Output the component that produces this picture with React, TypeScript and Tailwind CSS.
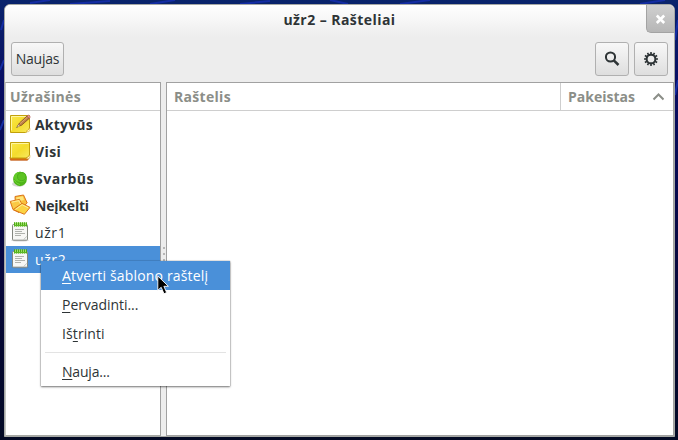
import React from "react";

function NoteIcon({ pencil = false }: { pencil?: boolean }) {
  return (
    <svg width="22" height="20" viewBox="0 0 22 20" className="mb-px block">
      <defs>
        <linearGradient id="noteFill" x1="0" y1="0" x2="1" y2="1">
          <stop offset="0" stopColor="#fbe94a" />
          <stop offset="0.5" stopColor="#f4dc2c" />
          <stop offset="1" stopColor="#f8ea60" />
        </linearGradient>
      </defs>
      {!pencil && <path d="M1 16 L1.5 19.2 H18.5 L20.8 16" fill="#dd7410" stroke="#c0591a" strokeWidth="0.8" />}
      <path d={pencil ? "M1.5 1.5 H20.5 V14 Q19 18.5 16.5 18.5 H1.5 Z" : "M1.5 1.5 H20.5 V14 Q19 17 16.5 17 H1.5 Z"} fill="url(#noteFill)" stroke="#c2a00b" />
      <path d="M2.5 16.5 V2.5 H19.5" fill="none" stroke="#fff6a0" strokeWidth="1" />
      <path d="M17 17.2 Q19.5 16.5 20.8 14 L21 16.5 L19 18 Z" fill="#fff9d9" stroke="#d4a519" strokeWidth="0.5" />
      {pencil && (
        <g>
          <path d="M8.5 12 L10.5 9 L18 2 L20.2 4.4 L12.5 11.3 Z" fill="#c08145" stroke="#713b1c" strokeWidth="0.7" />
          <path d="M11 9.6 L18.6 3" stroke="#e4b37a" strokeWidth="0.8" />
          <path d="M18 2 L19.6 0.9 L21.4 3 L20.2 4.4 Z" fill="#ea9c98" stroke="#a54848" strokeWidth="0.5" />
          <path d="M7.4 13.5 L9.4 10.6 L11.2 12 Z" fill="#eadbb8" stroke="#8c6a35" strokeWidth="0.4" />
          <path d="M7.2 13.7 L8.3 12.4 L9 13 Z" fill="#333" />
        </g>
      )}
    </svg>
  );
}

function PinIcon() {
  return (
    <svg width="22" height="20" viewBox="0 0 22 20" className="block">
      <ellipse cx="9.5" cy="15" rx="6.5" ry="2.8" fill="#b9bdb5" opacity="0.6" />
      <ellipse cx="11" cy="10" rx="6.9" ry="7.2" fill="#4fb519" />
      <path d="M4.6 8.5 Q5.5 3.2 11 2.8 Q17 3.4 17.7 8.5 Q16.5 13 12.5 13.2 Q6.5 13 4.6 8.5Z" fill="#63ca28" />
      <ellipse cx="12.7" cy="7.6" rx="4.2" ry="4" fill="#5cc322" stroke="#45a816" strokeWidth="0.8" />
      <path d="M5.3 11 Q7 14.6 11 15.6" fill="none" stroke="#6fd432" strokeWidth="1" />
    </svg>
  );
}

function UnfiledIcon() {
  return (
    <svg width="22" height="22" viewBox="0 0 22 22" className="mb-px block">
      <g strokeLinejoin="round" strokeWidth="1">
        <path d="M6 2.5 L14.5 1 L18.2 9 L14 13 L6.5 12 Z" fill="#f9c03e" stroke="#dc7519" />
        <path d="M7.2 3.5 L13.9 2.3 L15 6 L8 8Z" fill="#fde57b" />
        <path d="M1.2 7.4 L10.5 5.4 L14.5 14 L10 18.5 L4 15.6 Z" fill="#fac945" stroke="#dc7519" />
        <path d="M2.8 8.2 L9.9 6.7 L12 10.5" fill="none" stroke="#fee88c" strokeWidth="1.2" />
        <path d="M4.2 15.6 L13 9.4 L21 13.4 L15.4 20.3 Z" fill="#fbd343" stroke="#dc7519" />
        <path d="M6.5 15.4 L13.1 10.7 L19.2 13.8" fill="none" stroke="#feee9a" />
      </g>
    </svg>
  );
}

function NotebookIcon() {
  return (
    <svg width="22" height="22" viewBox="0 0 22 22" className="mb-px block">
      <ellipse cx="11" cy="19.3" rx="9" ry="1.2" fill="#777" opacity="0.3" />
      <rect x="3.5" y="3.5" width="15" height="15.7" rx="1" fill="#f7f7f5" stroke="#83867f" />
      <rect x="5" y="1.5" width="12" height="3.8" fill="#9ade65" />
      <path d="M5 3.3 H18" stroke="#4faa18" strokeWidth="4.2" strokeDasharray="1 1" />
      <path d="M5 4.5 H17" stroke="#5bb722" />
      <path d="M6 8.5 H15 M6 10.5 H13 M6 12.5 H16 M6 14.5 H12" stroke="#b0b2ad" />
      <path d="M14.5 18.7 L18 15.2" stroke="#c2c4bf" />
    </svg>
  );
}

function SearchIcon() {
  return (
    <svg width="16" height="16" viewBox="0 0 16 16">
      <circle cx="6.5" cy="6" r="4.6" fill="none" stroke="#2e3436" strokeWidth="2" />
      <path d="M9.8 9.3 L14.5 14" stroke="#2e3436" strokeWidth="2.5" />
    </svg>
  );
}

function GearIcon() {
  return (
    <svg width="16" height="16" viewBox="0 0 16 16">
      <circle cx="8" cy="8" r="4.4" fill="none" stroke="#2e3436" strokeWidth="2.1" />
      <path
        d="M8 1V3.5M8 12.5V15M1 8H3.5M12.5 8H15M4.5 1.9L5.7 4M10.3 12L11.5 14.1M11.5 1.9L10.3 4M5.7 12L4.5 14.1M1.9 4.5L4 5.7M12 10.3L14.1 11.5M14.1 4.5L12 5.7M4 10.3L1.9 11.5"
        stroke="#2e3436"
        strokeWidth="1.6"
      />
    </svg>
  );
}

const button =
  "flex h-[34px] items-center justify-center rounded-[3px] border border-[#b0b0b0] bg-linear-to-b from-[#f8f8f8] to-[#dedede]";

const notebooks = [
  { name: "Aktyvūs", icon: <NoteIcon pencil />, text: "font-bold tracking-[0.2px]" },
  { name: "Visi", icon: <NoteIcon />, text: "font-bold tracking-[0.4px]" },
  { name: "Svarbūs", icon: <PinIcon />, text: "font-bold tracking-[0.5px]" },
  { name: "Neįkelti", icon: <UnfiledIcon />, text: "font-bold tracking-[-0.2px]" },
  { name: "užr1", icon: <NotebookIcon />, text: "tracking-[0.6px]" },
  { name: "užr2", icon: <NotebookIcon />, text: "tracking-[0.6px]", selected: true },
];

function ContextMenu() {
  const item = "flex h-[29px] items-center pl-[21px] text-[14px] whitespace-pre";
  const key = "underline underline-offset-2 decoration-1";
  return (
    <div className="absolute left-[41px] top-[261px] h-[125px] w-[189px] bg-white shadow-[0_1px_2px_rgba(0,0,0,0.5),0_0_1px_rgba(0,0,0,0.5)]">
      <div className={item + " bg-[#4a90d9] text-white tracking-[0.17px]"}>
        <span><span className={key}>A</span>tverti šablono raštelį</span>
      </div>
      <div className={item + " tracking-[-0.05px]"}>
        <span><span className={key}>P</span>ervadinti...</span>
      </div>
      <div className={item + " tracking-[0.1px]"}>
        <span>Iš<span className={key}>t</span>rinti</span>
      </div>
      <div className="mx-1 my-[4px] h-px bg-[#e3e3e3]" />
      <div className={item + " tracking-[-0.2px]"}>
        <span><span className={key}>N</span>auja...</span>
      </div>
    </div>
  );
}

export default function App() {
  return (
    <div className="relative h-[440px] w-[678px] overflow-hidden bg-[linear-gradient(180deg,#0a246c_0%,#080d62_20%,#07083e_60%,#030a25_100%)] pt-1 pl-1 font-['Open_Sans','Noto_Sans',sans-serif] text-[#2e3436]">
      <svg width="678" height="440" className="absolute inset-0">
        <path d="M30 3 L50 0 M70 4 L110 1 M150 4 L175 0 M240 4 L270 1 M330 0 L348 4 M400 4 L430 0 M640 4 L665 0 M1 30 L4 20 M0 70 L4 60 M0 130 L4 120 M675 40 L678 20 M675 95 L678 80" stroke="#142da4" strokeWidth="2" />
      </svg>
      <div className="relative flex h-[433px] w-[671px] flex-col overflow-hidden rounded-t-[6px] border border-[#a6a8a4] bg-[#ededed]">
        <header className="flex h-[32px] shrink-0 items-start bg-linear-to-b from-white to-[#ededed]">
          <div className="w-[28px]" />
          <h1 className="flex-1 pt-[5px] text-center text-[14px] leading-[20px] font-bold tracking-[0.45px]">užr2 – Rašteliai</h1>
          <div className="flex h-[28px] w-[28px] items-center justify-center rounded-bl-[5px] border-b border-l border-[#a3a3a3] bg-linear-to-b from-[#d0d0d0] to-[#b6b6b6]">
            <svg width="12" height="12" viewBox="0 0 12 12">
              <path d="M1.8 2.5 L9.2 10 M9.2 2.5 L1.8 10" stroke="#fff" strokeWidth="2.6" />
            </svg>
          </div>
        </header>
        <div className="flex h-[45px] shrink-0 items-start gap-[5px] pt-[5px] pr-[6px] pl-[6px]">
          <button className={button + " w-[53px] pb-[2px] text-[14px] tracking-[-0.2px]"}>Naujas</button>
          <div className="flex-1" />
          <button className={button + " w-[34px]"}><SearchIcon /></button>
          <button className={button + " w-[34px]"}><GearIcon /></button>
        </div>
        <main className="flex min-h-0 flex-1">
          <aside className="w-[156px] shrink-0 border border-b-[#a6a8a4] border-l-[#c4c5c3] border-t-[#a1a1a1] border-r-[#a1a1a1] bg-white">
            <div className="flex h-[28px] items-center border-b border-[#cecece] pl-1 text-[14px] font-bold tracking-[0.35px] text-[#8b8e88]">Užrašinės</div>
            {notebooks.map((n) => (
              <div key={n.name} className={"flex h-[27px] items-center pl-[3px] " + (n.selected ? "bg-[#4a90d9] text-white" : "")}>
                {n.icon}
                <span className={"ml-[4px] text-[14px] " + n.text}>{n.name}</span>
              </div>
            ))}
          </aside>
          <div className="flex w-[5px] shrink-0 flex-col items-center gap-[4px] pt-[165px]">
            <i className="h-[2px] w-[2px] bg-[#b6b6b6]" />
            <i className="h-[2px] w-[2px] bg-[#b6b6b6]" />
            <i className="h-[2px] w-[2px] bg-[#b6b6b6]" />
          </div>
          <section className="flex-1 border border-[#a1a1a1] bg-white">
            <div className="flex h-[28px] items-stretch border-b border-[#cecece] text-[14px] font-bold text-[#8b8e88]">
              <div className="flex flex-1 items-center pl-[7px] tracking-[0.3px]">Raštelis</div>
              <div className="flex w-[113px] items-center justify-between border-l border-[#cecece] pr-[9px] pl-[7px]">
                <span>Pakeistas</span>
                <svg width="12" height="8" viewBox="0 0 12 8">
                  <path d="M1.5 6.5 L6.5 1.5 L11.5 6.5" fill="none" stroke="#8b8e88" strokeWidth="2" />
                </svg>
              </div>
            </div>
          </section>
        </main>
      </div>
      <ContextMenu />
      <svg width="13" height="20" viewBox="0 0 13 20" className="absolute left-[157px] top-[275px]">
        <path d="M0.8 1 V15.3 L4.2 12.3 L7 18.8 L9.6 17.5 L6.9 11.3 H11.4 Z" fill="#000" stroke="#fff" strokeWidth="0.9" />
      </svg>
    </div>
  );
}
